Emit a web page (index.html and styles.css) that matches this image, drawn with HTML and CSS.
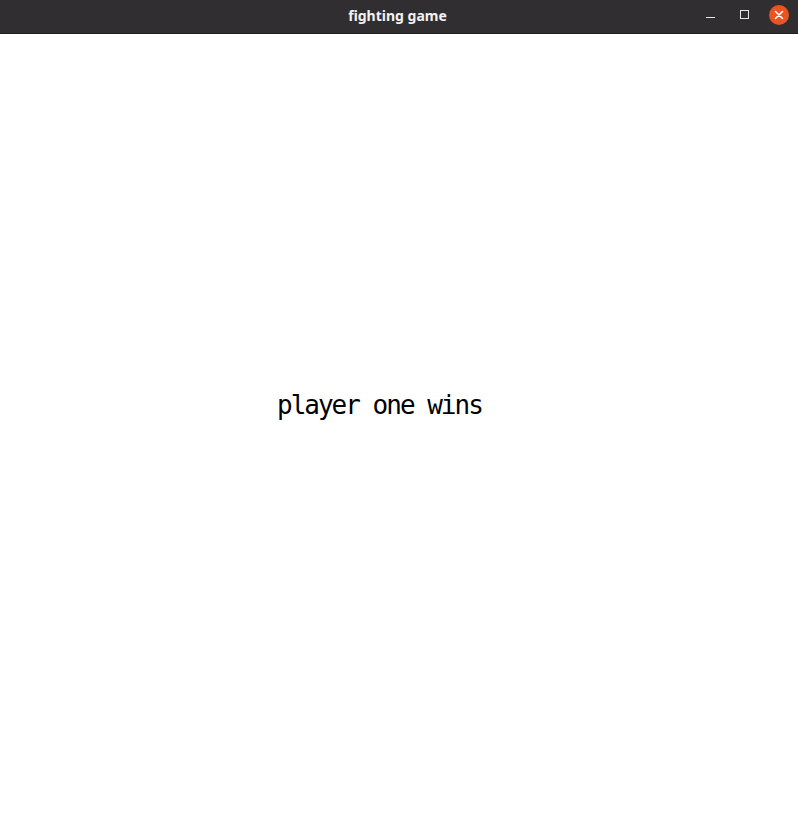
FILE: index.html
```html
<!DOCTYPE html>
<html>
<head>
<meta charset="utf-8">
<link rel="stylesheet" href="styles.css">
</head>
<body>
<div class="window">
  <div class="titlebar">
    <div class="title">fighting game</div>
    <div class="controls">
      <span class="btn min"><svg width="10" height="10" viewBox="0 0 10 10"><rect x="0" y="7" width="9" height="1" fill="#e6e6e6"/></svg></span>
      <span class="btn max"><svg width="10" height="10" viewBox="0 0 10 10"><rect x="0.5" y="0.5" width="8" height="8" fill="none" stroke="#e6e6e6" stroke-width="1"/></svg></span>
      <span class="btn close"><svg width="20" height="20" viewBox="0 0 20 20"><circle cx="10" cy="10" r="10" fill="#e95420"/><path d="M6.5 6.5 L13.5 13.5 M13.5 6.5 L6.5 13.5" stroke="#fff" stroke-width="1.6" stroke-linecap="round"/></svg></span>
    </div>
  </div>
  <div class="canvas">
    <div class="message">player one wins</div>
  </div>
</div>
</body>
</html>
```
FILE: styles.css
```css
html, body {
  margin: 0;
  padding: 0;
  background: #ffffff;
}
.window {
  width: 798px;
  height: 834px;
  display: flex;
  flex-direction: column;
}
.titlebar {
  height: 33px;
  background: #302e30;
  border-bottom: 1px solid #1f1e1f;
  position: relative;
  display: flex;
  align-items: center;
  justify-content: center;
}
.title {
  font-family: "Noto Sans", "DejaVu Sans", sans-serif;
  font-weight: 700;
  font-size: 14px;
  color: #f2f2f2;
  margin-top: -2px;
  margin-left: -3px;
}
.controls {
  position: absolute;
  right: 9px;
  top: 5px;
  display: flex;
  align-items: center;
}
.btn {
  display: flex;
  align-items: center;
  justify-content: center;
}
.min { width: 10px; height: 20px; margin-right: 24px; }
.max { width: 10px; height: 20px; margin-right: 19px; }
.close { width: 20px; height: 20px; }
.canvas {
  flex: 1;
  padding-top: 358px;
  padding-left: 277px;
}
.message {
  font-family: "DejaVu Sans Mono", monospace;
  font-size: 26px;
  line-height: 26px;
  letter-spacing: -2px;
  color: #000;
}
```
